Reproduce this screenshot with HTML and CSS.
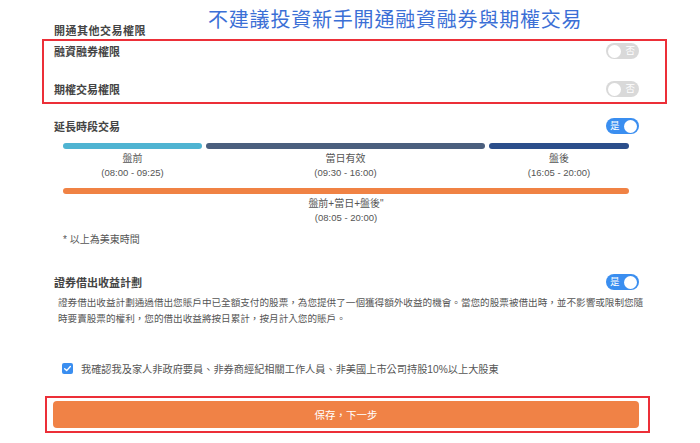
FILE: index.html
```html
<!DOCTYPE html>
<html lang="zh-Hant">
<head>
<meta charset="utf-8">
<link rel="stylesheet" href="styles.css">
</head>
<body>
<div class="page">
  <div class="top">
    <div class="group-label">開通其他交易權限</div>
    <div class="warn-title">不建議投資新手開通融資融券與期權交易</div>
  </div>

  <div class="red-box perms">
    <div class="row">
      <span class="row-label">融資融券權限</span>
      <span class="toggle off"><span class="knob"></span><span class="tg-text">否</span></span>
    </div>
    <div class="row">
      <span class="row-label">期權交易權限</span>
      <span class="toggle off"><span class="knob"></span><span class="tg-text">否</span></span>
    </div>
  </div>

  <div class="row section ext">
    <span class="row-label">延長時段交易</span>
    <span class="toggle on"><span class="tg-text">是</span><span class="knob"></span></span>
  </div>

  <div class="timeline">
    <div class="tl-grid">
      <div class="seg">
        <div class="bar cyan"></div>
        <div class="tl-name">盤前</div>
        <div class="tl-time">(08:00 - 09:25)</div>
      </div>
      <div class="seg">
        <div class="bar slate"></div>
        <div class="tl-name">當日有效</div>
        <div class="tl-time">(09:30 - 16:00)</div>
      </div>
      <div class="seg">
        <div class="bar navy"></div>
        <div class="tl-name">盤後</div>
        <div class="tl-time">(16:05 - 20:00)</div>
      </div>
    </div>
    <div class="seg full">
      <div class="bar orange"></div>
      <div class="tl-name">盤前+當日+盤後"</div>
      <div class="tl-time">(08:05 - 20:00)</div>
    </div>
  </div>

  <div class="note">* 以上為美東時間</div>

  <div class="row section lend">
    <span class="row-label">證券借出收益計劃</span>
    <span class="toggle on"><span class="tg-text">是</span><span class="knob"></span></span>
  </div>
  <p class="desc">證券借出收益計劃通過借出您賬戶中已全額支付的股票，為您提供了一個獲得額外收益的機會。當您的股票被借出時，並不影響或限制您隨<br>時要賣股票的權利，您的借出收益將按日累計，按月計入您的賬戶。</p>

  <label class="confirm">
    <span class="checkbox"><svg viewBox="0 0 12 12" width="9" height="9"><path d="M2.2 6.2 L4.9 8.8 L9.8 3.4" fill="none" stroke="#fff" stroke-width="1.8" stroke-linecap="round" stroke-linejoin="round"/></svg></span>
    <span class="confirm-text">我確認我及家人非政府要員、非券商經紀相關工作人員、非美國上市公司持股10%以上大股東</span>
  </label>

  <div class="red-box submit-box">
    <button class="submit">保存，下一步</button>
  </div>
</div>
</body>
</html>
```

FILE: styles.css
```css
html, body {
  margin: 0;
  padding: 0;
  background: #fff;
}
.page {
  width: 700px;
  height: 443px;
  overflow: hidden;
  font-family: "Liberation Sans", "Noto Sans CJK TC", sans-serif;
  color: #333;
}
.top {
  display: flex;
  align-items: flex-end;
  height: 39px;
  padding-left: 54px;
}
.group-label {
  font-size: 11px;
  line-height: 14px;
  font-weight: bold;
  color: #444;
  margin-bottom: 1px;
  letter-spacing: 0.5px;
}
.warn-title {
  margin-left: 62px;
  margin-bottom: 8px;
  font-size: 20px;
  line-height: 22px;
  color: #3b6fd6;
  letter-spacing: 0.8px;
  white-space: nowrap;
}
.red-box {
  border: 2px solid #ec2f38;
  box-sizing: border-box;
}
.perms {
  margin-left: 42px;
  width: 625px;
  height: 65px;
  padding: 0 26px 0 10px;
  display: flex;
  flex-direction: column;
  gap: 18px;
}
.row {
  display: flex;
  align-items: center;
  justify-content: space-between;
  height: 20px;
}
.row-label {
  font-size: 11px;
  font-weight: bold;
  color: #444;
}
.section {
  padding: 0 61px 0 54px;
}
.ext {
  margin-top: 12px;
}
.toggle {
  width: 33px;
  height: 16px;
  border-radius: 8px;
  box-sizing: border-box;
  padding: 0 2px;
  display: flex;
  align-items: center;
  justify-content: space-between;
}
.toggle.off {
  background: #d9d9d9;
}
.toggle.on {
  background: #3a8ef0;
}
.knob {
  width: 13px;
  height: 13px;
  border-radius: 50%;
  background: #fff;
}
.tg-text {
  font-size: 9.5px;
  color: #fff;
  line-height: 16px;
  padding: 0 2px;
}
.timeline {
  margin: 7px 0 0 63px;
  width: 566px;
}
.tl-grid {
  display: grid;
  grid-template-columns: 139fr 279fr 140fr;
  column-gap: 4px;
}
.bar {
  height: 6px;
  border-radius: 3px;
}
.cyan { background: #4fb4d2; }
.slate { background: #4b5f7e; }
.navy { background: #2b4e8b; }
.orange { background: #f08244; }
.tl-name, .tl-time {
  text-align: center;
  font-size: 9.5px;
  line-height: 14px;
  color: #555;
}
.tl-name {
  margin-top: 3px;
  font-size: 10px;
}
.full {
  margin-top: 8px;
}
.note {
  margin: 8px 0 0 63px;
  font-size: 10px;
  line-height: 14px;
  color: #555;
}
.lend {
  margin-top: 25px;
}
.desc {
  margin: 3px 0 0 58px;
  width: 600px;
  font-size: 9.6px;
  line-height: 16px;
  color: #555;
  white-space: nowrap;
}
.confirm {
  display: flex;
  align-items: center;
  margin: 34px 0 0 62px;
  height: 14px;
}
.checkbox {
  width: 11px;
  height: 11px;
  border-radius: 2px;
  background: #3a8ef0;
  display: flex;
  align-items: center;
  justify-content: center;
}
.confirm-text {
  margin-left: 8px;
  font-size: 10.2px;
  color: #555;
}
.submit-box {
  margin: 21px 0 0 45px;
  width: 605px;
  height: 37px;
  padding: 3px 0 0 6px;
}
.submit {
  display: block;
  width: 586px;
  height: 27px;
  border: 0;
  border-radius: 4px;
  background: #f08246;
  color: #fff;
  font-family: "Liberation Sans", "Noto Sans CJK TC", sans-serif;
  font-size: 10.5px;
  padding: 0;
}
```
